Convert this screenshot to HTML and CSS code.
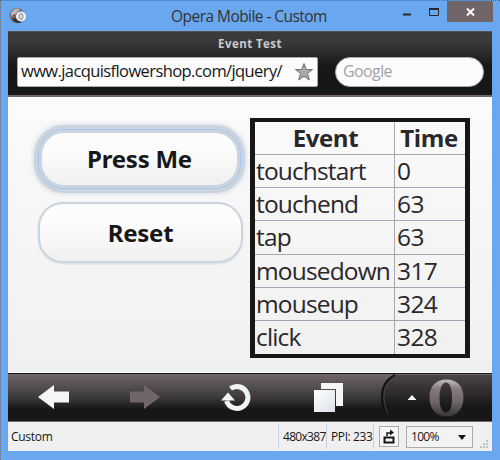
FILE: index.html
```html
<!DOCTYPE html>
<html lang="en">
<head>
<meta charset="utf-8">
<title>Opera Mobile - Custom</title>
<link rel="stylesheet" href="styles.css">
</head>
<body>
<div class="window">
  <header class="titlebar">
    <svg class="app-icon" width="18" height="18" viewBox="0 0 18 18"><circle cx="8" cy="8.5" r="7.5" fill="#70666a"/><path d="M2 6Q5 0 11 2L7 7Q2 7 2 12Z" fill="#b8b8ba"/><path d="M3 12Q7 18 13 15L9 10Z" fill="#3b3335"/><circle cx="12" cy="9.5" r="5" fill="#f1f2f5"/><ellipse cx="12" cy="9.5" rx="2" ry="3" fill="#d7dce3" stroke="#8d8589"/></svg>
    <span class="window-title">Opera Mobile - Custom</span>
    <div class="window-controls">
      <svg width="38" height="22" viewBox="0 0 38 22"><path d="M0 13.500H8" stroke="#29272b" stroke-width="2"/><path d="M26.500 7.500H35.500V14.500H26.500Z" fill="none" stroke="#29272b"/><path d="M26 8H36" stroke="#29272b" stroke-width="2"/></svg>
      <span class="close"><svg width="9" height="8" viewBox="0 0 9 8"><path d="M1 .5L8 7.5M8 .5L1 7.5" stroke="#fafafa" stroke-width="2"/></svg></span>
    </div>
  </header>
  <main class="browser">
    <div class="toolbar">
      <div class="page-title">Event Test</div>
      <div class="fields">
        <div class="address"><span class="url">www.jacquisflowershop.com/jquery/</span><svg width="20" height="20" viewBox="0 0 20 20"><path d="M10 1.5L12.2 7.5H18.5L13.5 11.5L15.3 18L10 14.2L4.7 18L6.5 11.5L1.5 7.5H7.8Z" fill="#aaa9ad" stroke="#756b6f"/></svg></div>
        <div class="search">Google</div>
      </div>
    </div>
    <section class="page">
      <div class="buttons"><button class="btn focused">Press Me</button><button class="btn">Reset</button></div>
      <table class="events">
        <tr><th>Event</th><th>Time</th></tr>
        <tr><td>touchstart</td><td>0</td></tr>
        <tr><td>touchend</td><td>63</td></tr>
        <tr><td>tap</td><td>63</td></tr>
        <tr><td>mousedown</td><td>317</td></tr>
        <tr><td>mouseup</td><td>324</td></tr>
        <tr><td>click</td><td>328</td></tr>
      </table>
    </section>
    <nav class="navbar">
      <svg width="484" height="48" viewBox="0 0 484 48">
        <defs><linearGradient id="tab" x2="0" y2="1"><stop stop-color="#4b4547"/><stop offset=".7" stop-color="#171717"/></linearGradient><linearGradient id="ring" x2="0" y2="1"><stop stop-color="#c0bfc2"/><stop offset=".25" stop-color="#857b80"/><stop offset=".6" stop-color="#70666a"/><stop offset="1" stop-color="#353233"/></linearGradient><linearGradient id="sheet" x2="1" y2="1"><stop stop-color="#fff"/><stop offset="1" stop-color="#dbe1e8"/></linearGradient></defs>
        <path d="M30 23L46 11V17.500H61V28.500H46V35Z" fill="#f5f5f7"/>
        <path d="M152 23L136 11V17.500H122V28.500H136V35Z" fill="#70666a"/>
        <path d="M222.500 14.500A11 11 0 1 1 218.500 27" fill="none" stroke="#f1f2f4" stroke-width="5"/><path d="M213 26.500L220 18.500L227 26.500Z" fill="#f5f5f7"/>
        <path d="M313 9H335V32H328V15H313Z" fill="#f5f5f7"/><path d="M306 16H327V38H306Z" fill="url(#sheet)"/>
        <path d="M484 1H387Q372 9 374 27Q375 39 381 47H484Z" fill="url(#tab)"/><path d="M387 1Q372 9 374 27Q375 35 378 40" fill="none" stroke="#131313" stroke-width="2"/><path d="M389 1Q375 9 376 25Q377 35 380 40" fill="none" stroke="#51494c" stroke-width=".8"/>
        <path d="M399.500 26L404 21L408.500 26Z" fill="#fafafa"/>
        <path fill-rule="evenodd" d="M421.500 23.500C421.500 12 428 5.500 438.500 5.500S455.500 12 455.500 23.500S449 42.500 438.500 42.500S421.500 35 421.500 23.500ZM431.500 24C431.500 33 434 38.500 438 38.500S444 33 444 24S442 8.500 438 8.500S431.500 15 431.500 24Z" fill="url(#ring)"/>
      </svg>
    </nav>
    <footer class="status">
      <span class="profile">Custom</span>
      <span class="size">480x387</span>
      <span class="ppi">PPI: 233</span>
      <span class="rotate"><svg width="20" height="21" viewBox="0 0 20 21"><path d="M5.500 11.500H14.500V16.500H5.500Z" fill="none" stroke="#171717" stroke-width="2"/><path d="M8 10V7H12" fill="none" stroke="#171717" stroke-width="1.500"/><path d="M11 3.500L15 6.500L11 9.500Z" fill="#171717"/></svg></span>
      <span class="zoom"><span>100%</span><svg width="8" height="5" viewBox="0 0 8 5"><path d="M0 0H8L4 5Z" fill="#171717"/></svg></span>
      <svg class="grip" width="9" height="9" viewBox="0 0 9 9"><path d="M6 0H8V2H6ZM3 3H5V5H3ZM6 3H8V5H6ZM0 6H2V8H0ZM3 6H5V8H3ZM6 6H8V8H6Z" fill="#bdc3cb"/></svg>
    </footer>
  </main>
</div>
</body>
</html>
```
FILE: styles.css
```css
* { box-sizing: border-box; }
body { margin: 0; font-family: "Open Sans", "Noto Sans", sans-serif; color: #171717; }
.window { width: 500px; height: 460px; background: #69a8ef; border-top: 1px dotted #70666a; border-left: 1px dotted #70666a; padding: 0 8px 8px 7px; overflow: hidden; }
.titlebar { height: 30px; display: flex; position: relative; justify-content: center; }
.app-icon { position: absolute; left: 1px; top: 6px; }
.window-title { font-size: 15.5px; line-height: 30px; color: #353033; letter-spacing: -.55px; margin-left: -2px; white-space: nowrap; }
.window-controls { position: absolute; right: -1px; top: 0; display: flex; gap: 6px; }
.window-controls svg { display: block; }
.close { width: 46px; height: 21px; background: #70666a; display: flex; align-items: center; justify-content: center; }
.browser { width: 484px; height: 420px; display: flex; flex-direction: column; }
.toolbar { height: 66px; flex: none; background: linear-gradient(#3c3c3c 0, #383838 18%, #171717 55%); border-top: 1px solid #555052; border-bottom: 2px solid #70666a; }
.page-title { height: 25px; line-height: 23px; text-align: center; font-size: 11.5px; font-weight: 700; letter-spacing: .45px; color: #cbcbd0; }
.fields { display: flex; padding-left: 9px; gap: 17px; }
.address { width: 301px; height: 30px; background: #fcfcfc; border: 1px solid #aaa; border-radius: 2px; padding: 0 3px; display: flex; align-items: center; justify-content: space-between; }
.url { font-size: 16.5px; line-height: 28px; margin-top: -2px; white-space: nowrap; letter-spacing: -.6px; }
.search { width: 149px; height: 30px; border-radius: 15px; background: #fcfcfc; border: 1px solid #aaa; padding-left: 7px; font-size: 16px; line-height: 27px; color: #a2a2a8; letter-spacing: -.6px; }
.page { height: 276px; flex: none; background: linear-gradient(#fbfbfb, #f0f0f0); border-bottom: 1px solid #fff; display: flex; padding: 21px 0 0 30px; }
.buttons { width: 205px; margin-right: 7px; padding-top: 12px; display: flex; flex-direction: column; gap: 14px; }
.btn { width: 205px; height: 61px; border: 2px solid #cad4df; border-radius: 25px; background: linear-gradient(#fcfcfc 35%, #f0f0f1); padding: 0 0 1px; font: 700 24px "Noto Sans", "Open Sans", sans-serif; letter-spacing: -.25px; color: #171717; box-shadow: 0 1px 2px #d4dae1; }
.btn.focused { width: 201px; height: 58px; margin-left: 1px; border: 3px solid #cad4df; box-shadow: 0 0 0 1px #a3c6ee, 0 0 0 5px #cad4df, 0 0 5px 6px #d7dce2; }
.events { width: 220px; height: 240px; table-layout: fixed; border-collapse: separate; border-spacing: 0; border: solid #171717; border-width: 4px 5px; font-size: 24.5px; color: #2a272a; }
.events tr > :first-child { width: 140px; border-right: 1px solid #aaa7ad; }
.events th, .events td { padding: 0 0 0 2px; height: 33px; line-height: 32px; border-bottom: 1px solid #a7a6ae; letter-spacing: -.85px; text-align: left; }
.events td:first-child { padding-left: 1px; }
.events td:last-child { letter-spacing: -.6px; }
.events th { font-size: 24px; letter-spacing: -.4px; text-align: center; }
.events tr > th:last-child { padding: 0 2px 0 0; }
.events tr:last-child td { border-bottom: 0; }
.navbar { height: 49px; flex: none; background: linear-gradient(#70666a, #3b393a 50%, #171717 75%); border-top: 1px solid #171717; border-bottom: 1px solid #70666a; }
.navbar svg { display: block; }
.status { height: 29px; flex: none; background: #f0f0f0; display: flex; padding: 2px 0 2px 3px; font-size: 12px; line-height: 25px; position: relative; letter-spacing: -.3px; white-space: nowrap; }
.profile { width: 268px; border-right: 1px solid #cbd2dc; }
.size { width: 48px; padding-left: 4px; border-right: 1px solid #cbd2dc; letter-spacing: -.7px; }
.ppi { width: 47px; padding-left: 4px; border-right: 1px solid #cbd2dc; letter-spacing: -.4px; }
.rotate { width: 20px; height: 21px; margin: 2px 7px 0 5px; border: 1px solid #aaa; background: #f7f7f7; }
.rotate svg { display: block; margin: -1px; }
.zoom { width: 67px; height: 22px; margin-top: 2px; border: 1px solid #aaa; background: #f3f3f4; padding: 0 6px 0 4px; line-height: 20px; display: flex; align-items: center; justify-content: space-between; letter-spacing: -.7px; }
.grip { position: absolute; right: 3px; bottom: 2px; }
```
